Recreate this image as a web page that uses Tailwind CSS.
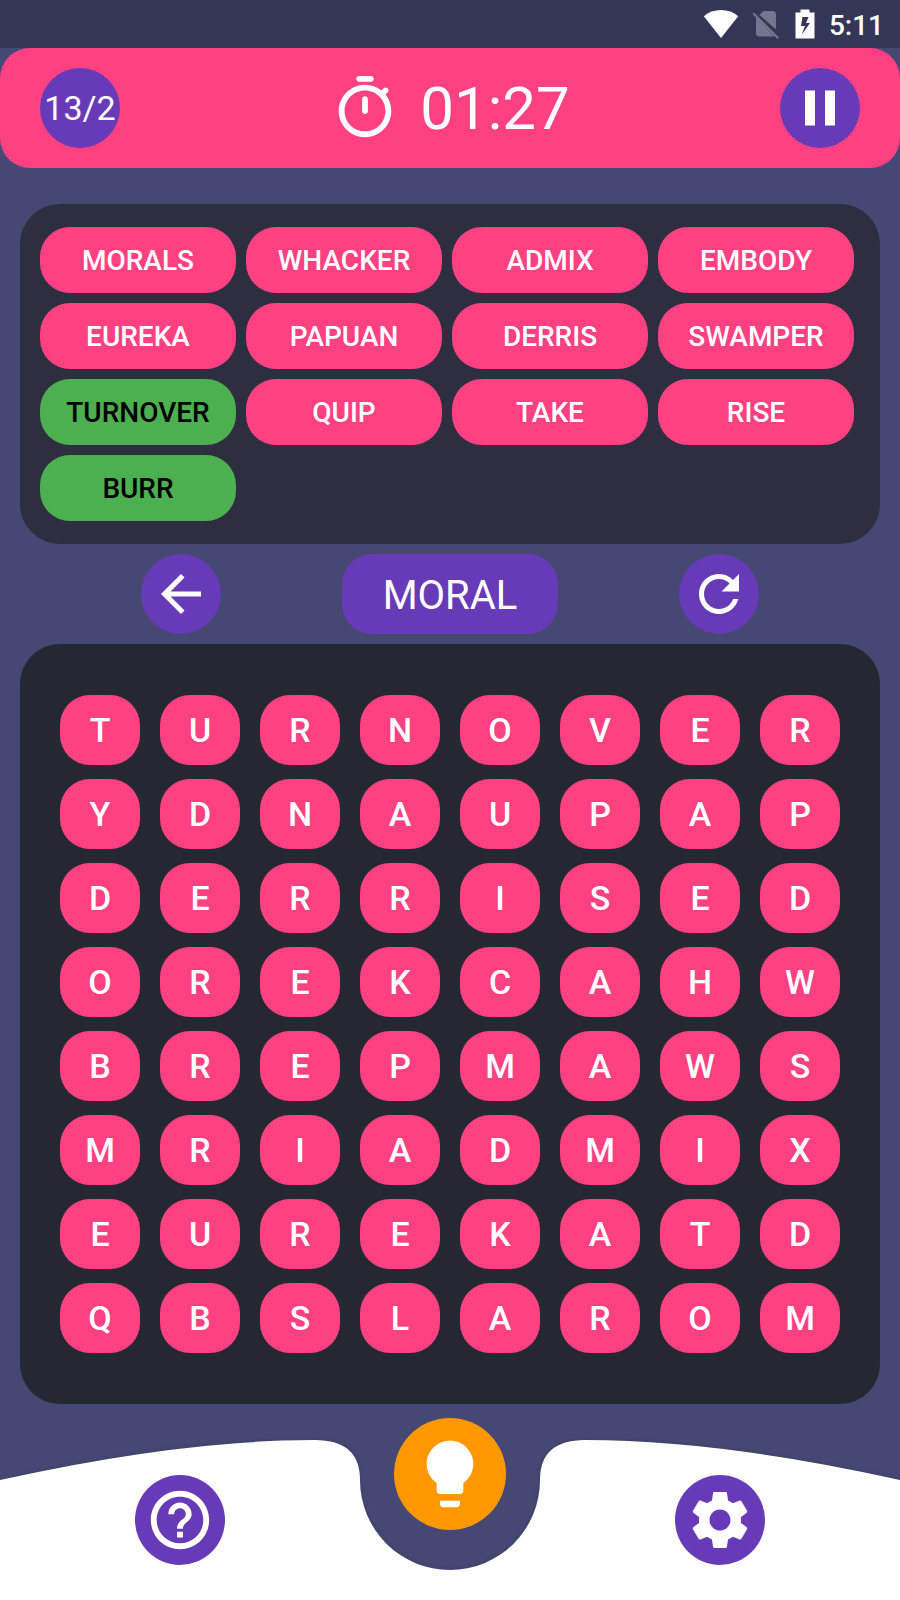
<!DOCTYPE html>
<html lang="en">
<head>
<meta charset="utf-8">
<meta name="viewport" content="width=device-width, initial-scale=1">
<title>Word Search</title>
<script src="https://cdn.jsdelivr.net/npm/@tailwindcss/browser@4"></script>
</head>
<body class="bg-[#444872] font-[Roboto,sans-serif] text-white">
<div class="flex min-h-screen flex-col">

  <!-- Status bar -->
  <div class="flex h-12 items-center justify-end bg-[#333656] pr-4">
    <svg class="mr-3 h-7 w-9" viewBox="0 0 36 28" fill="#fff" aria-label="Wi-Fi"><path d="M18 28 .8 6.200C5.500 2 11.500 0 18 0s12.500 2 17.200 6.200z"/></svg>
    <svg class="mr-4 h-[30px] w-7" viewBox="0 0 28 30" fill="#fff" fill-opacity=".32" aria-label="No SIM"><path d="M8.500 6 12.500 2H22c1.700 0 3 1.300 3 3V20.500zM5 8.500 23.500 27.500H8c-1.700 0-3-1.300-3-3zM1.500 5 3 3.500 28 28.500 26.500 30z"/></svg>
    <svg class="mr-[14px] h-[30px] w-5" viewBox="0 0 20 30" fill="#fff" fill-rule="evenodd" aria-label="Battery charging"><path d="M5.500 0.500h9V3.500H19.500V29.500H.5V3.500h5zM7.500 8 6 17h4L6.500 26 15 14h-4l2.500-6z"/></svg>
    <span class="pt-1 text-[28px] leading-8 font-medium">5:11</span>
  </div>

  <!-- Game header -->
  <header class="flex h-30 items-center justify-between rounded-[30px] bg-[#ff4081] px-10">
    <div class="flex size-20 items-center justify-center rounded-full bg-[#673ab7] text-[34px]">13/2</div>
    <div class="flex items-center gap-5">
      <svg class="size-[70px]" viewBox="0 0 24 24" fill="#fff" aria-hidden="true"><path d="M14 1h-4c-.55 0-1 .45-1 1s.45 1 1 1h4c.55 0 1-.45 1-1s-.45-1-1-1zm-2 13c.55 0 1-.45 1-1V9c0-.55-.45-1-1-1s-1 .45-1 1v4c0 .55.45 1 1 1zm7.030-6.610l.75-.75c.38-.38.39-1.010 0-1.400l-.01-.01c-.39-.39-1.010-.38-1.400 0l-.75.75C16.070 4.740 14.120 4 12 4c-4.800 0-8.880 3.960-9 8.760C2.870 17.840 6.940 22 12 22c4.980 0 9-4.030 9-9 0-2.120-.74-4.070-1.970-5.610zM12 20c-3.870 0-7-3.130-7-7s3.130-7 7-7 7 3.130 7 7-3.130 7-7 7z"/></svg>
      <time class="pt-[2px] text-[60px] leading-[70px]">01:27</time>
    </div>
    <button type="button" aria-label="Pause" class="flex size-20 items-center justify-center rounded-full bg-[#673ab7]">
      <svg class="size-15" viewBox="0 0 24 24" fill="#fff"><path d="M6 19h4V5H6v14zm8-14v14h4V5h-4z"/></svg>
    </button>
  </header>

  <main class="mt-9 flex flex-col gap-[10px] px-5">
    <!-- Words to find -->
    <ul class="grid grid-cols-4 gap-[10px] rounded-[40px] bg-[#2d2e40] py-[23px] pr-[26px] pl-5 text-center text-[28px] leading-[64px] font-medium">
      <li class="rounded-[30px] bg-[#ff4081] pt-[2px]">MORALS</li>
      <li class="rounded-[30px] bg-[#ff4081] pt-[2px]">WHACKER</li>
      <li class="rounded-[30px] bg-[#ff4081] pt-[2px]">ADMIX</li>
      <li class="rounded-[30px] bg-[#ff4081] pt-[2px]">EMBODY</li>
      <li class="rounded-[30px] bg-[#ff4081] pt-[2px]">EUREKA</li>
      <li class="rounded-[30px] bg-[#ff4081] pt-[2px]">PAPUAN</li>
      <li class="rounded-[30px] bg-[#ff4081] pt-[2px]">DERRIS</li>
      <li class="rounded-[30px] bg-[#ff4081] pt-[2px]">SWAMPER</li>
      <li class="rounded-[30px] bg-[#4caf50] pt-[2px] text-black">TURNOVER</li>
      <li class="rounded-[30px] bg-[#ff4081] pt-[2px]">QUIP</li>
      <li class="rounded-[30px] bg-[#ff4081] pt-[2px]">TAKE</li>
      <li class="rounded-[30px] bg-[#ff4081] pt-[2px]">RISE</li>
      <li class="rounded-[30px] bg-[#4caf50] pt-[2px] text-black">BURR</li>
    </ul>

    <!-- Current selection -->
    <div class="flex items-center justify-evenly">
      <button type="button" aria-label="Undo letter" class="flex size-20 items-center justify-center rounded-full bg-[#673ab7]">
        <svg class="size-15" viewBox="0 0 24 24" fill="#fff"><path d="M20 11H7.830l5.590-5.590L12 4l-8 8 8 8 1.410-1.410L7.830 13H20v-2z"/></svg>
      </button>
      <output class="min-w-[216px] rounded-[30px] bg-[#673ab7] px-10 pt-1 text-center text-[40px] leading-[76px]">MORAL</output>
      <button type="button" aria-label="Reset word" class="flex size-20 items-center justify-center rounded-full bg-[#673ab7]">
        <svg class="size-15" viewBox="0 0 24 24" fill="#fff"><path d="M17.650 6.350C16.200 4.900 14.210 4 12 4c-4.420 0-7.990 3.580-7.990 8s3.570 8 7.990 8c3.730 0 6.840-2.550 7.730-6h-2.080c-.82 2.330-3.040 4-5.650 4-3.310 0-6-2.690-6-6s2.690-6 6-6c1.660 0 3.140.69 4.220 1.780L13 11h7V4l-2.350 2.350z"/></svg>
      </button>
    </div>

    <!-- Letter board, filled by the script below -->
    <div id="board" class="grid grid-cols-8 gap-x-5 gap-y-[14px] rounded-[40px] bg-[#252733] px-10 py-[51px]"></div>
  </main>

  <!-- Bottom bar -->
  <footer class="relative mt-9 h-40 flex-none">
    <svg class="absolute inset-0 size-full overflow-visible drop-shadow-[0_0_2px_rgba(0,0,0,0.12)]" viewBox="0 0 900 160" preserveAspectRatio="none" fill="#fff" aria-hidden="true"><path d="M0 40Q180 0 315 0 360 0 360 40A90 90 0 0 0 540 40Q540 0 585 0 720 0 900 40V160H0z"/></svg>
    <button type="button" aria-label="Hint" class="absolute -top-[22px] left-1/2 flex size-28 -translate-x-1/2 items-center justify-center rounded-full bg-[#ff9800]">
      <svg class="size-20" viewBox="0 0 24 24" fill="#fff"><path d="M9 21c0 .5.4 1 1 1h4c.6 0 1-.5 1-1v-1H9v1zm3-19C8.100 2 5 5.100 5 9c0 2.400 1.200 4.500 3 5.700V17c0 .5.4 1 1 1h6c.6 0 1-.5 1-1v-2.300c1.800-1.300 3-3.400 3-5.700 0-3.900-3.100-7-7-7z"/></svg>
    </button>
    <div class="relative flex justify-evenly pt-[35px]">
      <button type="button" aria-label="Help" class="flex size-[90px] items-center justify-center rounded-full bg-[#673ab7]">
        <svg class="size-[70px]" viewBox="0 0 24 24" fill="#fff"><path d="M11 18h2v-2h-2v2zm1-16C6.480 2 2 6.480 2 12s4.480 10 10 10 10-4.480 10-10S17.520 2 12 2zm0 18c-4.410 0-8-3.590-8-8s3.590-8 8-8 8 3.590 8 8-3.590 8-8 8zm0-14c-2.210 0-4 1.790-4 4h2c0-1.100.9-2 2-2s2 .9 2 2c0 2-3 1.750-3 5h2c0-2.250 3-2.500 3-5 0-2.210-1.790-4-4-4z"/></svg>
      </button>
      <span class="pointer-events-none w-1/5"></span>
      <button type="button" aria-label="Settings" class="flex size-[90px] items-center justify-center rounded-full bg-[#673ab7]">
        <svg class="size-[70px]" viewBox="0 0 24 24" fill="#fff"><path d="M19.140 12.940c.04-.3.06-.61.06-.94 0-.32-.02-.64-.07-.94l2.030-1.580c.18-.14.23-.41.12-.61l-1.920-3.320c-.12-.22-.37-.29-.59-.22l-2.390.96c-.5-.38-1.030-.7-1.620-.94l-.36-2.540c-.04-.24-.24-.41-.48-.41h-3.840c-.24 0-.43.17-.47.41l-.36 2.540c-.59.24-1.130.57-1.620.94l-2.390-.96c-.22-.08-.47 0-.59.22L2.740 8.870c-.12.21-.08.47.12.61l2.030 1.580c-.05.3-.09.63-.09.94s.02.64.07.94l-2.030 1.580c-.18.14-.23.41-.12.61l1.920 3.320c.12.22.37.29.59.22l2.390-.96c.5.38 1.030.7 1.620.94l.36 2.540c.05.24.24.41.48.41h3.840c.24 0 .44-.17.47-.41l.36-2.540c.59-.24 1.130-.56 1.620-.94l2.390.96c.22.08.47 0 .59-.22l1.920-3.320c.12-.22.07-.47-.12-.61l-2.010-1.580zM12 15.600c-1.980 0-3.600-1.620-3.600-3.600s1.620-3.600 3.600-3.600 3.600 1.620 3.600 3.600-1.620 3.600-3.600 3.600z"/></svg>
      </button>
    </div>
  </footer>
</div>

<script>
  const rows = ["TURNOVER", "YDNAUPAP", "DERRISED", "OREKCAHW", "BREPMAWS", "MRIADMIX", "EUREKATD", "QBSLAROM"];
  const board = document.getElementById("board");
  for (const letter of rows.join("")) {
    const cell = document.createElement("button");
    cell.type = "button";
    cell.className = "h-[70px] rounded-[30px] bg-[#ff4081] text-[34px] font-medium";
    cell.textContent = letter;
    board.append(cell);
  }
</script>
</body>
</html>
